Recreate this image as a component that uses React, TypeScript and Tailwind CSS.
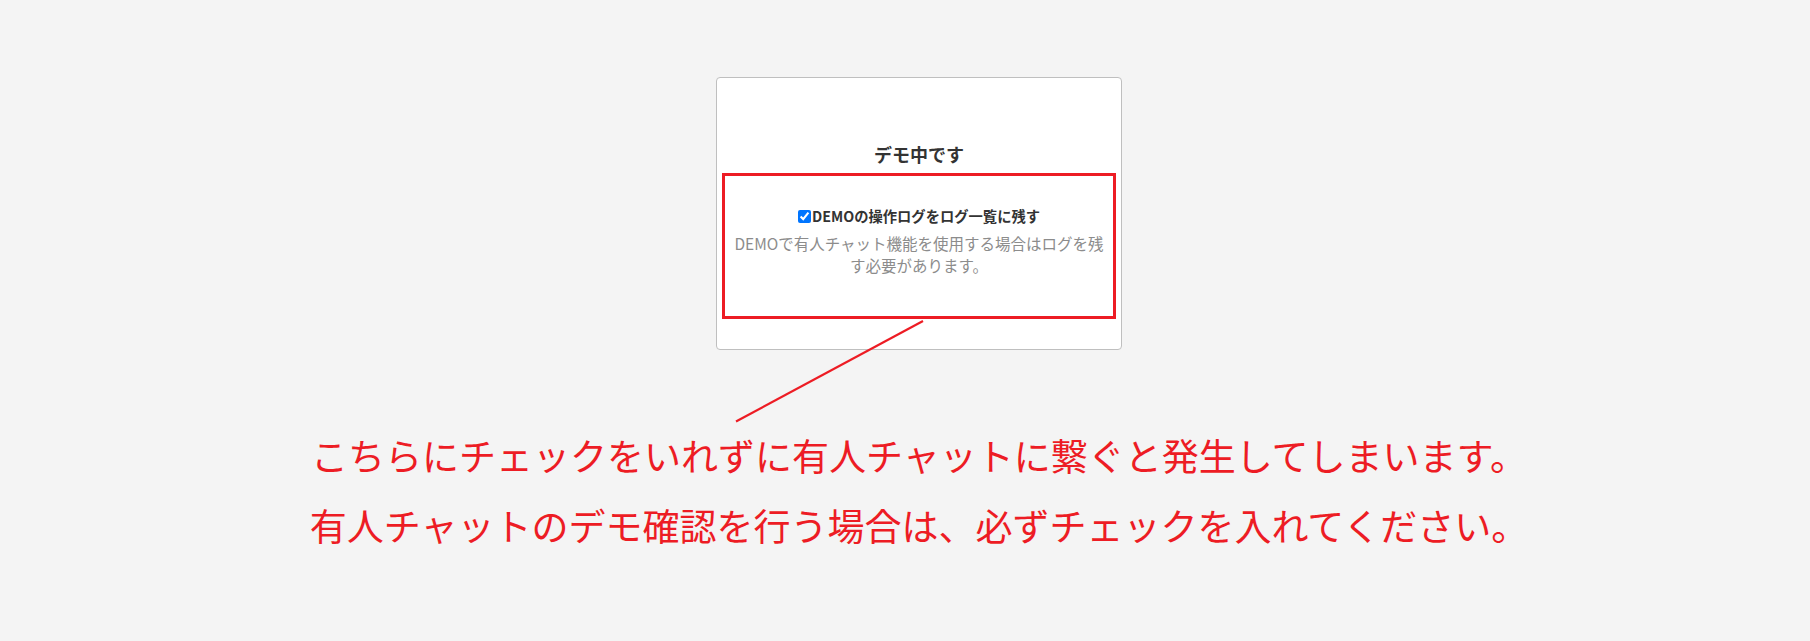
import React from "react";

export default function App() {
  const jp = { fontFamily: '"Noto Sans CJK JP", "Noto Sans", sans-serif' };
  return (
    <div className="relative w-[1810px] h-[641px] bg-[#f4f4f4] overflow-hidden" style={jp}>
      <div className="flex flex-col items-center pt-[77px] pl-[28px]">
        <div className="w-[406px] h-[273px] bg-white border border-[#bfbfbf] rounded-[4px] flex flex-col">
          <div className="pt-[63px] text-center text-[18px] leading-[27px] font-bold text-[#333333]">
            デモ中です
          </div>
          <div className="mt-[5px] mx-[5px] border-[3px] border-[#ed1c24] pt-[30px] pb-[40px] flex flex-col items-center">
            <label className="flex items-center text-[14.3px] leading-[20px] font-bold text-[#333333]">
              <input type="checkbox" defaultChecked className="m-0 mr-[1px] w-[13px] h-[13px]" />
              DEMOの操作ログをログ一覧に残す
            </label>
            <p className="mt-[7px] max-w-[376px] text-center text-[15.5px] leading-[21.7px] text-[#8c8c8c]">
              DEMOで有人チャット機能を使用する場合はログを残す必要があります。
            </p>
          </div>
        </div>
        <div className="mt-[70px] text-center text-[37px] leading-[70px] text-[#ed1c24] whitespace-nowrap">
          <div>こちらにチェックをいれずに有人チャットに繋ぐと発生してしまいます。</div>
          <div>有人チャットのデモ確認を行う場合は、必ずチェックを入れてください。</div>
        </div>
      </div>
      <svg className="absolute left-0 top-0 pointer-events-none" width="1810" height="641">
        <line x1="736" y1="421.5" x2="923" y2="321" stroke="#ed1c24" strokeWidth="2.2" />
      </svg>
    </div>
  );
}
